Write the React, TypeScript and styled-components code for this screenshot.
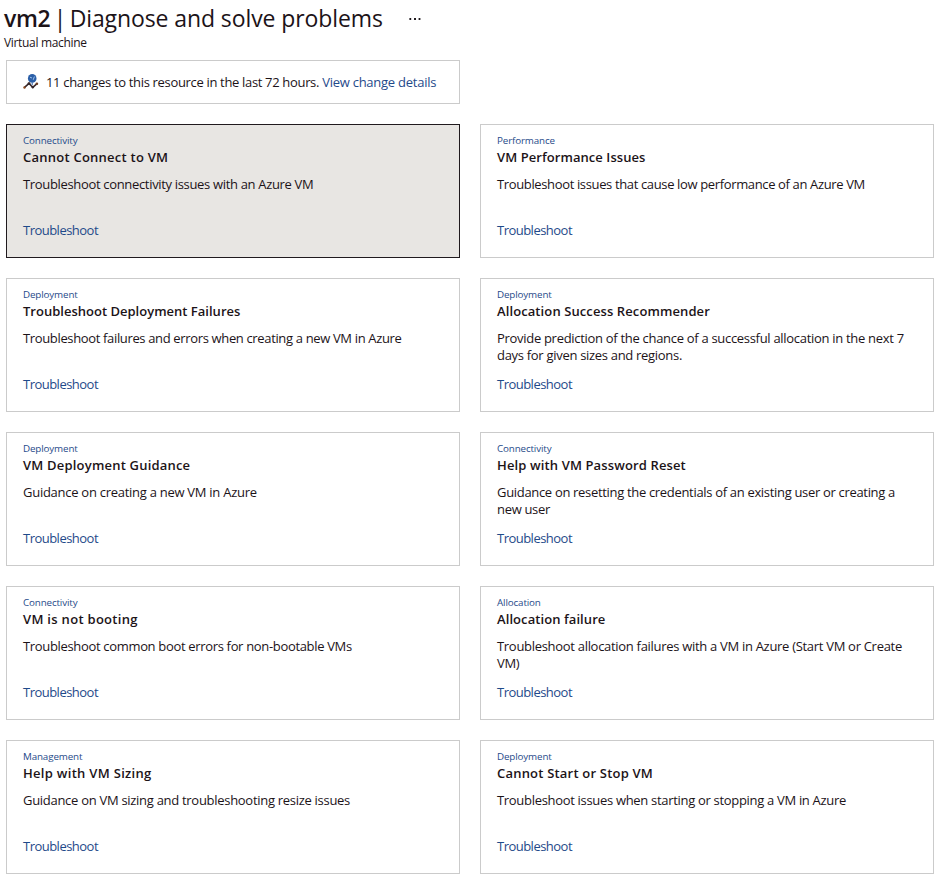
import React from "react";
import styled, { createGlobalStyle } from "styled-components";

const GlobalStyle = createGlobalStyle`
  * { box-sizing: border-box; }
  body {
    margin: 0;
    background: #fff;
    color: #1c1318;
    font-family: "Open Sans", "Noto Sans", sans-serif;
    font-size: 13px;
    overflow: hidden;
  }
  h1, h2, p { margin: 0; }
`;

const Page = styled.main`
  width: 945px;
  height: 894px;
  padding: 0 11px 0 6px;
`;

const Header = styled.header`
  height: 60px;
  margin-left: -2px;
  padding-top: 3px;
`;

const TitleRow = styled.div`
  display: flex;
  align-items: center;
  height: 30px;
`;

const Title = styled.h1`
  width: 405px;
  font-size: 23px;
  font-weight: 400;
  line-height: 30px;
  letter-spacing: -0.1px;
  white-space: nowrap;
`;

const ResourceName = styled.span`
  font-weight: 600;
  letter-spacing: -0.35px;
`;

const Divider = styled.span`
  word-spacing: -2.5px;
`;

const Subtitle = styled.p`
  font-size: 12px;
  line-height: 16px;
  margin-top: 2px;
  letter-spacing: -0.33px;
`;

const ChangesBar = styled.section`
  display: flex;
  align-items: center;
  gap: 6px;
  width: 454px;
  height: 44px;
  padding: 0 16px;
  border: 1px solid #cbcbcb;
  white-space: nowrap;
  letter-spacing: -0.33px;
`;

const Link = styled.a`
  color: #1f4a8a;
  text-decoration: none;
`;

const DetailsLink = styled(Link)`
  letter-spacing: -0.25px;
`;

const Grid = styled.section`
  display: grid;
  grid-template-columns: 454px 454px;
  grid-auto-rows: 134px;
  gap: 20px;
  margin-top: 20px;
`;

const Card = styled.article<{ $selected?: boolean }>`
  display: flex;
  flex-direction: column;
  align-items: flex-start;
  padding: 9px 16px 0;
  border: 1px solid ${(p) => (p.$selected ? "#201a1e" : "#cbcbcb")};
  background: ${(p) => (p.$selected ? "#e8e6e3" : "#fff")};
`;

const Category = styled.span`
  color: #1f4a8a;
  font-size: 9.8px;
  line-height: 14px;
  letter-spacing: -0.13px;
`;

const CardTitle = styled.h2<{ $tracking: number }>`
  font-size: 13px;
  font-weight: 600;
  line-height: 18px;
  letter-spacing: ${(p) => p.$tracking}px;
`;

const Description = styled.p<{ $tracking: number }>`
  height: 34px;
  margin-top: 10px;
  line-height: 17px;
  white-space: pre;
  letter-spacing: ${(p) => p.$tracking}px;
`;

const Action = styled(Link)`
  margin-top: 12px;
  line-height: 17px;
  letter-spacing: -0.52px;
`;

const cards = [
  { category: "Connectivity", title: "Cannot Connect to VM", titleTracking: 0.24, tracking: -0.33, text: "Troubleshoot connectivity issues with an Azure VM" },
  { category: "Performance", title: "VM Performance Issues", titleTracking: 0.07, tracking: -0.36, text: "Troubleshoot issues that cause low performance of an Azure VM" },
  { category: "Deployment", title: "Troubleshoot Deployment Failures", titleTracking: 0.01, tracking: -0.35, text: "Troubleshoot failures and errors when creating a new VM in Azure" },
  { category: "Deployment", title: "Allocation Success Recommender", titleTracking: 0.1, tracking: -0.3, text: "Provide prediction of the chance of a successful allocation in the next 7\ndays for given sizes and regions." },
  { category: "Deployment", title: "VM Deployment Guidance", titleTracking: 0.2, tracking: -0.27, text: "Guidance on creating a new VM in Azure" },
  { category: "Connectivity", title: "Help with VM Password Reset", titleTracking: 0.13, tracking: -0.32, text: "Guidance on resetting the credentials of an existing user or creating a\nnew user" },
  { category: "Connectivity", title: "VM is not booting", titleTracking: 0.3, tracking: -0.33, text: "Troubleshoot common boot errors for non-bootable VMs" },
  { category: "Allocation", title: "Allocation failure", titleTracking: 0.08, tracking: -0.3, text: "Troubleshoot allocation failures with a VM in Azure (Start VM or Create\nVM)" },
  { category: "Management", title: "Help with VM Sizing", titleTracking: 0.3, tracking: -0.29, text: "Guidance on VM sizing and troubleshooting resize issues" },
  { category: "Deployment", title: "Cannot Start or Stop VM", titleTracking: 0.2, tracking: -0.31, text: "Troubleshoot issues when starting or stopping a VM in Azure" },
];

const ChangesIcon = () => (
  <svg width="17" height="16" viewBox="0 0 17 16" fill="none">
    <circle cx="9.2" cy="4.4" r="4.3" fill="#2b5fa8" />
    <path d="M7 3.2l2 0.8M11.4 2.6L10.2 5.8" stroke="#9fc3ea" />
    <path d="M9.2 8.5v2.5" stroke="#2b5fa8" />
    <path d="M1.3 13.6L6 9.4l3.8 4 4.2-3.8" stroke="#33252a" strokeWidth="1.5" />
    <circle cx="1.5" cy="13.5" r="1.2" fill="#8a4a22" />
    <circle cx="6" cy="9.6" r="1.4" fill="#33252a" />
    <circle cx="9.8" cy="13.1" r="1.4" fill="#33252a" />
    <circle cx="13.9" cy="9.8" r="1.3" fill="#6b3a20" />
  </svg>
);

const MoreIcon = styled(({ className }: { className?: string }) => (
  <svg className={className} width="12" height="2" viewBox="0 0 12 2" fill="#201a1e">
    <rect x="0.4" width="1.8" height="2" />
    <rect x="5" width="2" height="2" />
    <rect x="9.6" width="1.8" height="2" />
  </svg>
))`
  margin-top: 2px;
`;

export default function App() {
  return (
    <Page>
      <GlobalStyle />
      <Header>
        <TitleRow>
          <Title>
            <ResourceName>vm2</ResourceName>
            <Divider> | </Divider>
            Diagnose and solve problems
          </Title>
          <MoreIcon />
        </TitleRow>
        <Subtitle>Virtual machine</Subtitle>
      </Header>
      <ChangesBar>
        <ChangesIcon />
        <span>11 changes to this resource in the last 72 hours. <DetailsLink>View change details</DetailsLink></span>
      </ChangesBar>
      <Grid>
        {cards.map((card, i) => (
          <Card key={card.title} $selected={i === 0}>
            <Category>{card.category}</Category>
            <CardTitle $tracking={card.titleTracking}>{card.title}</CardTitle>
            <Description $tracking={card.tracking}>{card.text}</Description>
            <Action>Troubleshoot</Action>
          </Card>
        ))}
      </Grid>
    </Page>
  );
}
